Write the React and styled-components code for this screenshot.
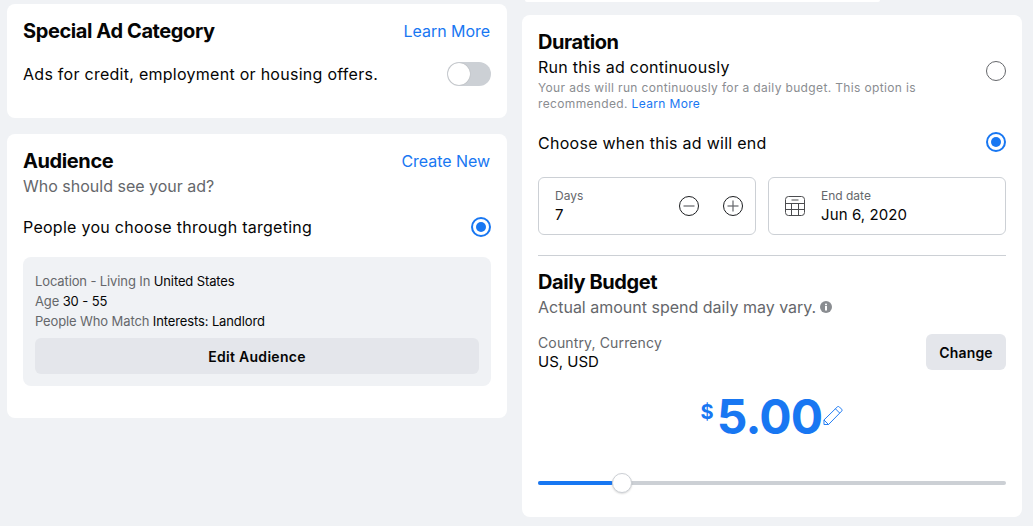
import React from "react";
import styled, { createGlobalStyle } from "styled-components";

const Global = createGlobalStyle`
  html, body { margin: 0; padding: 0; background: #f0f2f5; height: 526px; overflow: hidden; }
  body { font-family: Inter, "Liberation Sans", sans-serif; color: #050505; }
  * { box-sizing: border-box; }
`;
const Page = styled.div`
  display: flex; gap: 15px; padding-left: 7px; width: 1033px; height: 526px; overflow: hidden;
`;
const LeftColumn = styled.div`
  width: 500px; padding-top: 4px; display: flex; flex-direction: column; gap: 16px;
`;
const RightColumn = styled.div`
  width: 500px; display: flex; flex-direction: column;
`;
const TopStub = styled.div`
  width: 355px; height: 2px; margin-left: 3px; margin-bottom: 13px; background: #fff; border-radius: 0 0 6px 6px;
`;
const Card = styled.section`
  background: #fff; border-radius: 8px; padding: 15px 16px 16px; height: ${p => p.$h}px;
`;
const Row = styled.div`
  display: flex; justify-content: space-between; align-items: center;
`;
const Title = styled.h2`
  margin: 0; font-size: 20px; line-height: 24px; font-weight: 650; letter-spacing: -0.4px;
`;
const Link = styled.a`
  color: #1877f2; font-size: 16px; line-height: 24px; letter-spacing: -0.05px; margin-right: 1px;
`;
const InlineLink = styled.a`
  color: #1877f2;
`;
const Label = styled.div`
  font-size: 16px; line-height: 20px; font-weight: 420; letter-spacing: 0.27px;
`;
const Subtle = styled.div`
  font-size: 16px; line-height: 20px; color: #65676b;
`;
const Switch = styled.div`
  width: 44px; height: 24px; border-radius: 12px; background: #ccd0d5; position: relative;
`;
const Knob = styled.div`
  position: absolute; left: 1px; top: 1px; width: 22px; height: 22px; border-radius: 50%; background: #fff; box-shadow: 0 0 1px rgba(0,0,0,.3);
`;
const Radio = styled.div`
  width: 20px; height: 20px; border-radius: 50%; flex: none;
  border: ${p => (p.$on ? "2px solid #1877f2" : "1px solid #65676b")};
  display: flex; align-items: center; justify-content: center;
  margin-top: ${p => p.$top || 0}px;
  &::after { content: ""; display: ${p => (p.$on ? "block" : "none")}; width: 10px; height: 10px; border-radius: 50%; background: #1877f2; }
`;
const SwitchRow = styled(Row)`
  margin-top: 19px;
`;
const WhoLine = styled(Subtle)`
  margin-top: 3px;
`;
const TargetRow = styled(Row)`
  margin-top: 21px;
`;
const EndRow = styled(Row)`
  margin-top: 20px; align-items: flex-start;
`;
const EndLabel = styled(Label)`
  padding-top: 1px;
`;
const OptionRow = styled(Row)`
  margin-top: 3px; align-items: flex-start;
`;
const AudienceBox = styled.div`
  margin-top: 20px; background: #f0f2f5; border-radius: 8px; padding: 14px 12px 12px;
`;
const Fact = styled.div`
  font-size: 13px; line-height: 20px; color: #65676b; letter-spacing: -0.12px;
  & b { font-weight: 400; color: #050505; }
`;
const WideButton = styled.div`
  margin-top: 7px; height: 36px; border-radius: 6px; background: #e4e6eb; display: flex; align-items: center; justify-content: center;
  font-size: 14px; font-weight: 600; letter-spacing: .3px;
`;
const Hint = styled.div`
  width: 440px; font-size: 12px; line-height: 16px; color: #8a8d91; margin-top: 3px; letter-spacing: .35px;
`;
const Fields = styled.div`
  display: grid; grid-template-columns: 218px 238px; gap: 12px; margin-top: 24px;
`;
const Field = styled.div`
  height: 58px; border: 1px solid #ccd0d5; border-radius: 6px; display: flex; align-items: center;
`;
const FieldText = styled.div`
  flex: 1; display: flex; flex-direction: column;
`;
const DaysText = styled(FieldText)`
  padding-left: 16px;
`;
const FieldLabel = styled.span`
  font-size: 12px; line-height: 18px; color: #65676b;
`;
const FieldValue = styled.span`
  font-size: 15px; line-height: 20px; letter-spacing: .1px;
`;
const Divider = styled.hr`
  border: 0; height: 1px; background: #ccd0d5; margin: 20px 0 14px;
`;
const InfoLine = styled(Subtle)`
  display: flex; align-items: center; gap: 4px; margin-top: 3px;
`;
const CurrencyRow = styled(Row)`
  margin-top: 16px;
`;
const CurrencyLabel = styled(Subtle)`
  font-size: 14px; line-height: 19px; letter-spacing: .14px;
`;
const CurrencyValue = styled.div`
  font-size: 15px; line-height: 19px;
`;
const Change = styled.div`
  width: 80px; height: 36px; border-radius: 6px; background: #e4e6eb; display: flex; align-items: center; justify-content: center; font-size: 14px; font-weight: 600; letter-spacing: .2px;
`;
const Amount = styled.div`
  margin-top: 14px; height: 64px; display: flex; justify-content: center; align-items: center; color: #1877f2; font-weight: 700;
`;
const Dollar = styled.span`
  font-size: 20px; line-height: 24px; align-self: flex-start; margin-top: 15px; margin-right: 3px;
`;
const Big = styled.span`
  font-size: 48px; line-height: 64px; letter-spacing: -0.8px;
`;
const Track = styled.div`
  margin-top: 32px; height: 4px; border-radius: 2px; background: #ccd0d5; position: relative;
`;
const Fill = styled.div`
  height: 4px; border-radius: 2px; background: #1877f2;
`;
const Thumb = styled.div`
  position: absolute; top: -8px; width: 20px; height: 20px; border-radius: 50%; background: #fff; border: 1px solid #ccd0d5; box-shadow: 0 1px 2px rgba(0,0,0,.15);
`;
const Icon = styled.svg`
  display: block; flex: none; margin: ${p => p.$m || 0};
`;

const Stepper = ({ plus, m }) => (
  <Icon $m={m} width="20" height="20" viewBox="0 0 20 20" fill="none" stroke="#1c1e21" strokeWidth="1">
    <circle cx="10" cy="10" r="9.5" />
    <path d="M4.5 10h11" stroke="#65676b" strokeWidth="1.2" />
    {plus && <path d="M10 4.5v11" stroke="#65676b" strokeWidth="1.2" />}
  </Icon>
);
const Calendar = () => (
  <Icon $m="0 16px" width="20" height="20" viewBox="0 0 20 20" fill="none" stroke="#4b4c4f" strokeWidth="1">
    <rect x=".5" y=".5" width="19" height="19" rx="3" />
    <path d="M6.5 4h7M.5 7.5h19M.5 13.5h19M6.5 7.5v12M13.5 7.5v12" />
  </Icon>
);
const Info = () => (
  <Icon width="12" height="12" viewBox="0 0 12 12">
    <circle cx="6" cy="6" r="6" fill="#8a8d91" />
    <rect x="5" y="5" width="2" height="4.5" fill="#fff" />
    <rect x="5" y="2.5" width="2" height="1.8" rx=".9" fill="#fff" />
  </Icon>
);
const Pencil = () => (
  <Icon $m="0 0 4px 1px" width="20" height="19" viewBox="0 0 20 20" fill="none" stroke="#1877f2" strokeWidth="1">
    <path d="M.5 19.5v-4.8L14.6.9a1.4 1.4 0 0 1 2 0l2.5 2.5a1.4 1.4 0 0 1 0 2L5.3 19.5z" />
    <path d="M12.6 3l4.4 4.4M.5 14.7l4.8 4.8" />
  </Icon>
);

export default function App() {
  return (
    <>
      <Global />
      <Page>
        <LeftColumn>
          <Card $h={114}>
            <Row>
              <Title>Special Ad Category</Title>
              <Link>Learn More</Link>
            </Row>
            <SwitchRow>
              <Label>Ads for credit, employment or housing offers.</Label>
              <Switch><Knob /></Switch>
            </SwitchRow>
          </Card>
          <Card $h={284}>
            <Row>
              <Title>Audience</Title>
              <Link>Create New</Link>
            </Row>
            <WhoLine>Who should see your ad?</WhoLine>
            <TargetRow>
              <Label>People you choose through targeting</Label>
              <Radio $on />
            </TargetRow>
            <AudienceBox>
              <Fact>Location - Living In <b>United States</b></Fact>
              <Fact>Age <b>30 - 55</b></Fact>
              <Fact>People Who Match <b>Interests: Landlord</b></Fact>
              <WideButton>Edit Audience</WideButton>
            </AudienceBox>
          </Card>
        </LeftColumn>
        <RightColumn>
          <TopStub />
          <Card $h={502}>
            <Title>Duration</Title>
            <OptionRow>
              <div>
                <Label>Run this ad continuously</Label>
                <Hint>Your ads will run continuously for a daily budget. This option is recommended. <InlineLink>Learn More</InlineLink></Hint>
              </div>
              <Radio $top={4} />
            </OptionRow>
            <EndRow>
              <EndLabel>Choose when this ad will end</EndLabel>
              <Radio $on />
            </EndRow>
            <Fields>
              <Field>
                <DaysText>
                  <FieldLabel>Days</FieldLabel>
                  <FieldValue>7</FieldValue>
                </DaysText>
                <Stepper m="0 24px 0 0" />
                <Stepper plus m="0 12px 0 0" />
              </Field>
              <Field>
                <Calendar />
                <FieldText>
                  <FieldLabel>End date</FieldLabel>
                  <FieldValue>Jun 6, 2020</FieldValue>
                </FieldText>
              </Field>
            </Fields>
            <Divider />
            <Title>Daily Budget</Title>
            <InfoLine>Actual amount spend daily may vary. <Info /></InfoLine>
            <CurrencyRow>
              <div>
                <CurrencyLabel>Country, Currency</CurrencyLabel>
                <CurrencyValue>US, USD</CurrencyValue>
              </div>
              <Change>Change</Change>
            </CurrencyRow>
            <Amount>
              <Dollar>$</Dollar>
              <Big>5.00</Big>
              <Pencil />
            </Amount>
            <Track>
              <Fill style={{ width: "16%" }} />
              <Thumb style={{ left: "15.8%" }} />
            </Track>
          </Card>
        </RightColumn>
      </Page>
    </>
  );
}
